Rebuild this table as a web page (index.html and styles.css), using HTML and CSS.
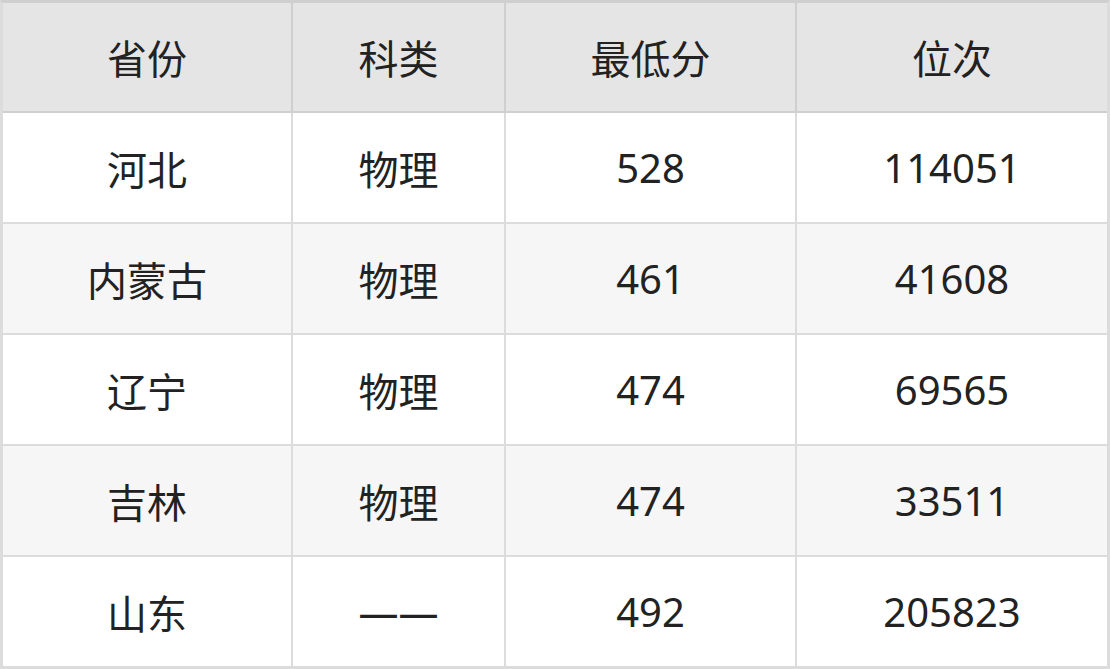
FILE: index.html
```html
<!DOCTYPE html>
<html lang="zh-CN">
<head>
<meta charset="utf-8">
<link rel="stylesheet" href="styles.css">
</head>
<body>
<table class="score-table">
  <colgroup>
    <col class="c1"><col class="c2"><col class="c3"><col class="c4">
  </colgroup>
  <thead>
    <tr><th>省份</th><th>科类</th><th>最低分</th><th>位次</th></tr>
  </thead>
  <tbody>
    <tr><td>河北</td><td>物理</td><td>528</td><td>114051</td></tr>
    <tr><td>内蒙古</td><td>物理</td><td>461</td><td>41608</td></tr>
    <tr><td>辽宁</td><td>物理</td><td>474</td><td>69565</td></tr>
    <tr><td>吉林</td><td>物理</td><td>474</td><td>33511</td></tr>
    <tr><td>山东</td><td>——</td><td>492</td><td>205823</td></tr>
  </tbody>
</table>
</body>
</html>
```
FILE: styles.css
```css
html, body {
  margin: 0;
  padding: 0;
  background: #ffffff;
}
.score-table {
  width: 1110px;
  height: 669px;
  border-collapse: separate;
  border-spacing: 0;
  table-layout: fixed;
  border: 3px solid #dcdcdc;
  border-top-color: #cfcfcf;
  font-family: "Noto Sans", "Noto Sans CJK SC", sans-serif;
  font-size: 40px;
  color: #222222;
  box-sizing: border-box;
}
.c1 { width: 290px; }
.c2 { width: 213px; }
.c3 { width: 291px; }
.c4 { width: 310px; }
th, td {
  text-align: center;
  vertical-align: middle;
  padding: 0;
  font-weight: normal;
  border-right: 2px solid #dcdcdc;
  border-bottom: 2px solid #dcdcdc;
}
th:last-child, td:last-child { border-right: none; }
tbody tr:last-child td { border-bottom: none; }
thead th {
  background: #e5e5e5;
  height: 108px;
  border-right-color: #cfcfcf;
  border-bottom-color: #cfcfcf;
}
tbody td { height: 109px; background: #ffffff; }
tbody tr:nth-child(even) td { background: #f6f6f6; }
```
